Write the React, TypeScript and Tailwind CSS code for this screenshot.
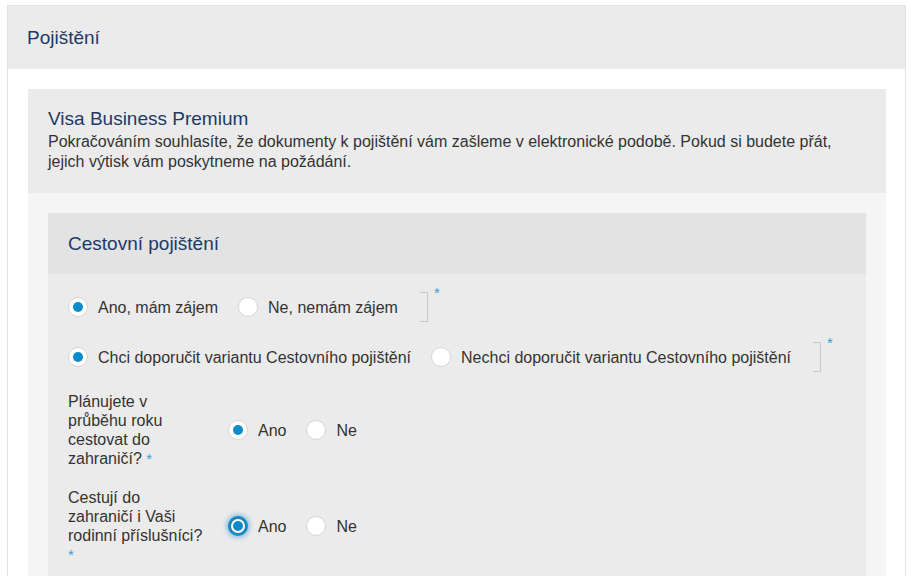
import React from "react";

const FONT = { fontFamily: '"Liberation Sans", Arial, sans-serif' };

function Radio({ checked, focused }: { checked?: boolean; focused?: boolean }) {
  return (
    <span
      className={`flex h-5 w-5 shrink-0 items-center justify-center rounded-full bg-white ${
        focused
          ? "border-[3px] border-[#1d87bd] shadow-[0_0_4px_2px_rgba(40,150,210,0.45)]"
          : "border border-[#d6d6d6]"
      }`}
    >
      {checked && <span className="h-[10px] w-[10px] rounded-full bg-[#0a8ccc]" />}
    </span>
  );
}

function Option({ label, checked, focused }: { label: string; checked?: boolean; focused?: boolean }) {
  return (
    <label className="flex items-center gap-[10px] whitespace-nowrap">
      <Radio checked={checked} focused={focused} />
      <span className="text-[16px] leading-[19px] text-[#333]">{label}</span>
    </label>
  );
}

function Required() {
  return (
    <div className="flex items-start">
      <span className="ml-[2px] h-[30px] w-2 border-y border-r border-[#c8c8c8]" />
      <span className="ml-[6px] -mt-[7px] text-[15px] leading-none text-[#3a9fd8]">*</span>
    </div>
  );
}

function Star() {
  return <span className="text-[15px] text-[#3a9fd8]">*</span>;
}

export default function App() {
  return (
    <div className="min-h-[576px] bg-white pt-[5px] pl-[7px] pr-[6px]" style={FONT}>
      <div className="border border-[#e3e3e3] min-h-[600px]">
        <div className="bg-[#ebebeb] px-[19px] py-5">
          <h1 className="text-[19px] leading-[23px] text-[#1b3a68]">Pojištění</h1>
        </div>
        <div className="p-5 pr-[19px]">
          <div className="bg-[#f5f5f5]">
            <div className="bg-[#ebebeb] px-5 pt-[19px] pb-[21px]">
              <h2 className="text-[19px] leading-[22px] text-[#1b3a68]">Visa Business Premium</h2>
              <p className="mt-[2px] text-[16px] leading-[20px] text-[#333]">
                Pokračováním souhlasíte, že dokumenty k pojištění vám zašleme v elektronické podobě. Pokud si budete přát,
                jejich výtisk vám poskytneme na požádání.
              </p>
            </div>
            <div className="p-5 pb-0">
              <div className="bg-[#ebebeb] min-h-[400px]">
                <div className="bg-[#e3e3e3] px-5 py-5">
                  <h3 className="text-[19px] leading-[21px] text-[#1b3a68]">Cestovní pojištění</h3>
                </div>
                <div className="flex flex-col gap-5 px-5 pt-[18px]">
                  <div className="flex items-center gap-5">
                    <Option label="Ano, mám zájem" checked />
                    <Option label="Ne, nemám zájem" />
                    <Required />
                  </div>
                  <div className="flex items-center gap-5">
                    <Option label="Chci doporučit variantu Cestovního pojištění" checked />
                    <Option label="Nechci doporučit variantu Cestovního pojištění" />
                    <Required />
                  </div>
                  <div className="flex items-center gap-5">
                    <div className="w-[140px] text-[16px] leading-[19px] text-[#333]">
                      Plánujete v průběhu roku cestovat do zahraničí? <Star />
                    </div>
                    <div className="flex items-center gap-5">
                      <Option label="Ano" checked />
                      <Option label="Ne" />
                    </div>
                  </div>
                  <div className="flex items-center gap-5">
                    <div className="w-[140px] text-[16px] leading-[19px] text-[#333]">
                      Cestují do zahraničí i Vaši rodinní příslušníci? <Star />
                    </div>
                    <div className="flex items-center gap-5">
                      <Option label="Ano" checked focused />
                      <Option label="Ne" />
                    </div>
                  </div>
                </div>
              </div>
            </div>
          </div>
        </div>
      </div>
    </div>
  );
}
